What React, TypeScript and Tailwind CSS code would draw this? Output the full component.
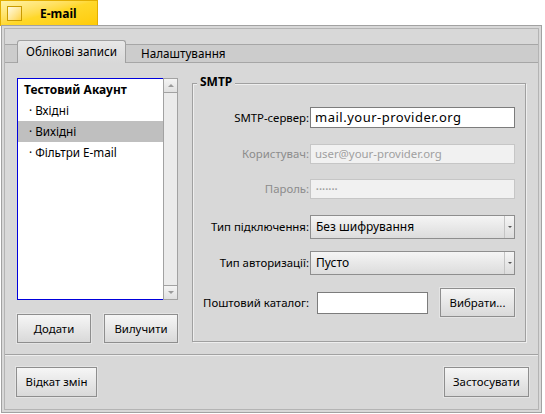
import React from "react";

const btn =
  "flex items-center justify-center border border-[#8e8e8e] bg-linear-to-b from-[#f6f6f6] to-[#d9d9d9] shadow-[0_0_0_1px_#e4e4e4] text-black";

function Combo({ value }: { value: string }) {
  return (
    <div className="flex h-[24px] w-[205px] border border-[#8e8e8e] bg-linear-to-b from-[#f5f5f5] to-[#dcdcdc]">
      <span className="flex flex-1 items-center pl-[5px] text-[12px]">{value}</span>
      <span className="flex w-[10px] items-center justify-center border-l border-[#c4c4c4]">
        <span className="h-0 w-0 border-x-[2px] border-t-[2px] border-x-transparent border-t-[#555]" />
      </span>
    </div>
  );
}

function Row({ label, dim, children, className }: { label: string; dim?: boolean; children: React.ReactNode; className: string }) {
  return (
    <div className={`flex items-center ${className}`}>
      <span className={`w-[117px] pr-[1px] text-right ${dim ? "text-[#8c8c8c]" : ""}`}>{label}</span>
      {children}
    </div>
  );
}

const items = [
  { text: "Тестовий Акаунт", bold: true },
  { text: "Вхідні" },
  { text: "Вихідні", selected: true },
  { text: "Фільтри E-mail" },
];

export default function App() {
  return (
    <div className="relative h-[414px] w-[545px] overflow-hidden bg-white font-['Noto_Sans',sans-serif] text-[11.4px] leading-none text-black">
      {/* title tab */}
      <div className="flex h-[26px] w-[98px] items-center border border-b-0 border-[#e2ae00] bg-linear-to-br from-[#fff3a6] via-[#ffd829] to-[#ffcb00]">
        <span className="ml-[6px] h-[15px] w-[15px] border border-[#c99a00] bg-linear-to-br from-[#fffbe0] to-[#ffd43a]" />
        <span className="ml-[18px] text-[12px] font-bold">E-mail</span>
      </div>

      {/* window */}
      <div className="-mt-px ml-px h-[388px] w-[541px] border border-[#a2a2a2] bg-[#d8d8d8] p-[2px]">
        <div className="flex h-full flex-col border border-[#b4b4b4]">
          {/* tabs */}
          <div className="mt-[15px] flex h-[19px] border-y border-[#a6a6a6] bg-[#cccccc] text-[11.7px]">
            <div className="relative z-10 -mt-[5px] ml-[12px] flex h-[23px] w-[109px] items-center justify-center rounded-t-[3px] border border-b-0 border-[#a0a0a0] bg-linear-to-b from-[#e8e8e8] to-[#d8d8d8]">
              Облікові записи
            </div>
            <div className="flex items-center pl-[15px]">Налаштування</div>
          </div>

          {/* content */}
          <div className="flex h-[291px] gap-[14px] px-[12px] pt-[15px]">
            <div className="flex w-[161px] flex-col">
              <div className="flex h-[222px]">
                <div className="w-[146px] border-y border-l border-[#0000dd] bg-white text-[11.7px]">
                  {items.map((it) => (
                    <div
                      key={it.text}
                      className={`flex h-[21px] items-center ${it.selected ? "bg-[#bfbfbf]" : ""} ${it.bold ? "pl-[6px] text-[12px] font-bold" : "pl-[11px]"}`}
                    >
                      {!it.bold && <span className="mr-[3px]">·</span>}
                      {it.text}
                    </div>
                  ))}
                </div>
                <div className="flex w-[15px] flex-col border border-[#a2a2a2] bg-[#ebebeb]">
                  <div className="flex h-[14px] items-center justify-center border-b border-[#a2a2a2] bg-linear-to-b from-[#f4f4f4] to-[#e0e0e0]">
                    <span className="h-0 w-0 border-x-[3px] border-b-[3px] border-x-transparent border-b-[#9a9a9a]" />
                  </div>
                  <div className="flex-1" />
                  <div className="flex h-[14px] items-center justify-center border-t border-[#a2a2a2] bg-linear-to-b from-[#f4f4f4] to-[#e0e0e0]">
                    <span className="h-0 w-0 border-x-[3px] border-t-[3px] border-x-transparent border-t-[#9a9a9a]" />
                  </div>
                </div>
              </div>
              <div className="mt-[14px] flex gap-[13px]">
                <div className={`${btn} h-[29px] w-[74px]`}>Додати</div>
                <div className={`${btn} h-[29px] w-[74px]`}>Вилучити</div>
              </div>
            </div>

            <div className="relative mt-[5px] flex h-[259px] w-[336px] flex-col border border-[#a0a0a0] shadow-[inset_1px_1px_0_#eeeeee,1px_1px_0_#eeeeee]">
              <span className="absolute -top-[8px] left-[4px] bg-[#d8d8d8] px-[3px] text-[12px] font-bold">SMTP</span>
              <Row label="SMTP-сервер:" className="mt-[23px] h-[21px]">
                <div className="flex h-[21px] w-[205px] items-center border border-[#7c7c7c] bg-white pl-[4px] text-[13px] tracking-[0.5px]">
                  mail.your-provider.org
                </div>
              </Row>
              <Row label="Користувач:" dim className="mt-[16px] h-[20px]">
                <div className="flex h-[20px] w-[205px] items-center border border-[#c6c6c6] bg-[#f1f1f1] pl-[4px] text-[#a0a0a0]">
                  user@your-provider.org
                </div>
              </Row>
              <Row label="Пароль:" dim className="mt-[15px] h-[20px]">
                <div className="flex h-[20px] w-[205px] items-center border border-[#c6c6c6] bg-[#f1f1f1] pl-[5px] text-[7px] tracking-[0.5px] text-[#a0a0a0]">
                  •••••••
                </div>
              </Row>
              <Row label="Тип підключення:" className="mt-[16px] h-[24px]">
                <Combo value="Без шифрування" />
              </Row>
              <Row label="Тип авторизації:" className="mt-[12px] h-[24px]">
                <Combo value="Пусто" />
              </Row>
              <Row label="Поштовий каталог:" className="mt-[13px] h-[29px]">
                <div className="ml-[7px] h-[22px] w-[111px] border border-[#7c7c7c] bg-white" />
                <div className={`${btn} ml-[12px] h-[29px] w-[75px]`}>Вибрати...</div>
              </Row>
            </div>
          </div>

          {/* bottom bar */}
          <div className="flex flex-1 items-center justify-between border-t border-[#a2a2a2] pl-[11px] pr-[9px] shadow-[inset_0_1px_0_#eeeeee]">
            <div className={`${btn} h-[30px] w-[81px]`}>Відкат змін</div>
            <div className={`${btn} h-[30px] w-[85px]`}>Застосувати</div>
          </div>
        </div>
      </div>
    </div>
  );
}
